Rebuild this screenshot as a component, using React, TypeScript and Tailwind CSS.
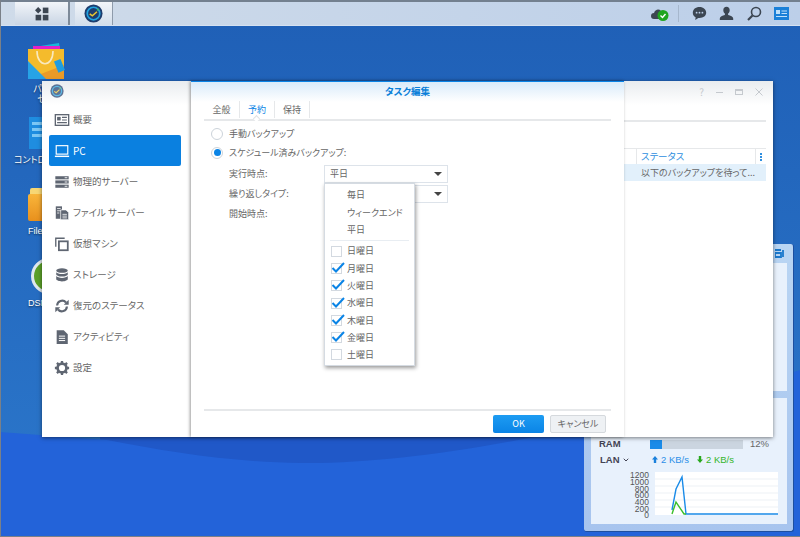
import React from "react";
import { ChevronDown } from "lucide-react";

const JP = "font-['Noto_Sans_CJK_JP','Noto_Sans',sans-serif]";

const navItems = [
  { label: "概要", icon: "overview" },
  { label: "PC", icon: "pc", active: true },
  { label: "物理的サーバー", icon: "server" },
  { label: "ファイル サーバー", icon: "file" },
  { label: "仮想マシン", icon: "vm" },
  { label: "ストレージ", icon: "storage" },
  { label: "復元のステータス", icon: "restore" },
  { label: "アクティビティ", icon: "activity" },
  { label: "設定", icon: "gear" },
];

const days = [
  { label: "日曜日", on: false },
  { label: "月曜日", on: true },
  { label: "火曜日", on: true },
  { label: "水曜日", on: true },
  { label: "木曜日", on: true },
  { label: "金曜日", on: true },
  { label: "土曜日", on: false },
];

function NavIcon({ name, color }: { name: string; color: string }) {
  const c = color;
  return (
    <svg width="16" height="16" viewBox="0 0 18 18" fill="none" className="shrink-0">
      {name === "overview" && (
        <>
          <rect x="1.5" y="3" width="15" height="12" stroke={c} strokeWidth="1.5" />
          <rect x="3.5" y="5.5" width="4" height="4" fill={c} />
          <path d="M9 6h5.5M9 9h5.5M3.5 12h11" stroke={c} strokeWidth="1.3" />
        </>
      )}
      {name === "pc" && (
        <>
          <rect x="2.5" y="3" width="13" height="9.5" stroke={c} strokeWidth="1.3" />
          <path d="M1 15h16" stroke={c} strokeWidth="1.6" />
        </>
      )}
      {name === "server" && (
        <>
          <rect x="1.5" y="2.5" width="15" height="3.5" fill={c} />
          <rect x="1.5" y="7.2" width="15" height="3.5" fill={c} />
          <rect x="1.5" y="12" width="15" height="3.5" fill={c} />
          <path d="M12 4.2h3M12 9h3M12 13.8h3" stroke="#fff" strokeWidth="1" />
        </>
      )}
      {name === "file" && (
        <>
          <path d="M2 1.5h7v14H2z" fill={c} />
          <path d="M7.5 5.5h6l3 3v8h-9z" fill={c} stroke="#fff" strokeWidth="0.8" />
          <path d="M9.5 10.5h5M9.5 12.5h5M9.5 14.5h5M3.5 4h4M3.5 6.5h4M3.5 9h2.5" stroke="#fff" strokeWidth="0.9" />
        </>
      )}
      {name === "vm" && (
        <>
          <path d="M2 12V2.5h10" stroke={c} strokeWidth="1.5" />
          <rect x="5.5" y="6" width="10" height="10" stroke={c} strokeWidth="2" />
        </>
      )}
      {name === "storage" && (
        <>
          <ellipse cx="9" cy="4" rx="6.5" ry="2.6" fill={c} />
          <path d="M2.5 5.8v2.4c0 1.4 2.9 2.6 6.5 2.6s6.5-1.2 6.5-2.6V5.8c-1 1.3-3.6 2.1-6.5 2.1s-5.500-.8-6.500-2.100z" fill={c} />
          <path d="M2.5 10.2v3.4c0 1.4 2.9 2.6 6.5 2.6s6.5-1.2 6.5-2.6v-3.4c-1 1.3-3.6 2.1-6.5 2.1s-5.500-.8-6.500-2.100z" fill={c} />
        </>
      )}
      {name === "restore" && (
        <>
          <path d="M3.5 8.5A5.7 5.7 0 0 1 13.5 5" stroke={c} strokeWidth="2.4" />
          <path d="M11 7.5h5.5V2z" fill={c} />
          <path d="M14.5 9.5A5.7 5.7 0 0 1 4.5 13" stroke={c} strokeWidth="2.4" />
          <path d="M7 10.5H1.5V16z" fill={c} />
        </>
      )}
      {name === "activity" && (
        <>
          <path d="M3 1.5h8l4.5 4.5v11H3z" fill={c} />
          <path d="M5.5 8h7M5.5 10.5h7M5.5 13h7" stroke="#fff" strokeWidth="1.1" />
        </>
      )}
      {name === "gear" && (
        <>
          <circle cx="9" cy="9" r="5" stroke={c} strokeWidth="3" />
          <path d="M9 1v3M9 14v3M1 9h3M14 9h3M3.3 3.3l2.2 2.2M12.5 12.5l2.2 2.2M3.3 14.7l2.2-2.2M12.5 5.5l2.2-2.2" stroke={c} strokeWidth="2.6" />
        </>
      )}
    </svg>
  );
}

function AppLogo({ size, faded }: { size: number; faded?: boolean }) {
  return (
    <svg width={size} height={size} viewBox="0 0 20 20" className={faded ? "opacity-70" : ""}>
      <circle cx="10" cy="10" r="9.5" fill="#1d3d6e" />
      <circle cx="10" cy="10" r="6.6" fill="none" stroke="#21a3e0" strokeWidth="1.8" />
      <path d="M6 10.5l2.8 2 4.8-4.4" fill="none" stroke="#e9c531" strokeWidth="1.6" />
      <path d="M14 4l2.5 2.5-3 .6z" fill="#3fb36a" />
    </svg>
  );
}

function Select({ value }: { value?: string }) {
  return (
    <div className="w-[124px] h-[18px] border border-[#dde3ea] bg-white flex items-center justify-between px-[5px] text-[9px] text-[#666]">
      <span>{value}</span>
      <span className="w-0 h-0 border-x-[4px] border-x-transparent border-t-[4px] border-t-[#444]" />
    </div>
  );
}

function FormRow({ label, value }: { label: string; value?: string }) {
  return (
    <div className="flex items-center h-[18px]">
      <span className="w-[95px] text-[9px] text-[#666]">{label}</span>
      {value !== undefined && <Select value={value} />}
    </div>
  );
}

function Radio({ checked, label }: { checked?: boolean; label: string }) {
  return (
    <div className="flex items-center h-[19px] gap-[6px]">
      <span className="w-[12px] h-[12px] rounded-full border border-[#ccd3da] bg-white flex items-center justify-center">
        {checked && <span className="w-[7px] h-[7px] rounded-full bg-[#0a84e6]" />}
      </span>
      <span className="text-[9px] text-[#666]">{label}</span>
    </div>
  );
}

function Checkbox({ on }: { on: boolean }) {
  return (
    <span className="relative w-[11px] h-[11px] border border-[#d3d9e0] bg-white shrink-0">
      {on && (
        <svg width="15" height="13" viewBox="0 0 15 13" className="absolute -top-[3px] -left-[1px]">
          <path d="M1.5 7l3.5 3.5L13 2" fill="none" stroke="#0a84e6" strokeWidth="2" />
        </svg>
      )}
    </span>
  );
}

function ScheduleMenu() {
  return (
    <div className="absolute left-[324px] top-[183px] w-[91px] h-[183px] bg-white border border-[#d5dbe2] shadow-[1px_2px_4px_rgba(0,0,0,0.4)] pt-[2px] text-[9px] text-[#666] z-20">
      {["毎日", "ウィークエンド", "平日"].map((t) => (
        <div key={t} className="h-[17.5px] pl-[22px] flex items-center">
          {t}
        </div>
      ))}
      <div className="mx-[5px] mt-[1px] mb-[1px] border-t border-[#e8edf2]" />
      <div className="mt-[2px]">
        {days.map((d) => (
          <div key={d.label} className="h-[17.3px] pl-[6px] flex items-center gap-[5px]">
            <Checkbox on={d.on} />
            <span>{d.label}</span>
          </div>
        ))}
      </div>
    </div>
  );
}

function TaskDialog() {
  return (
    <div className="w-[433px] bg-white border-t border-[#0a84e6] bg-gradient-to-b from-[#d9ebfa] via-white to-white bg-[length:100%_40px] bg-no-repeat flex flex-col px-[13px] shadow-[-1px_0_3px_rgba(0,0,0,0.4)] relative z-10">
      <div className="h-[19px] text-center text-[9.5px] font-bold text-[#0a7fd9] leading-[18px]">タスク編集</div>
      <div className="flex h-[20px] border-b-2 border-[#e6e8ea] text-[9px] text-[#666]">
        <div className="w-[36px] flex items-center justify-center border-r border-[#e6e8ea] h-[17px]">全般</div>
        <div className="relative w-[35px] flex items-center justify-center border-r border-[#e6e8ea] h-[17px] text-[#0a84e6]">
          予約
          <span className="absolute left-[14px] top-[15px] w-[5px] h-[5px] rotate-45 bg-white border-l border-t border-[#dfe2e5]" />
        </div>
        <div className="w-[35px] flex items-center justify-center border-r border-[#e6e8ea] h-[17px]">保持</div>
      </div>
      <div className="flex flex-col pl-[7px] pt-[3px]">
        <Radio label="手動バックアップ" />
        <Radio checked label="スケジュール済みバックアップ:" />
        <div className="pl-[18px] flex flex-col gap-[2px] pt-[3px]">
          <FormRow label="実行時点:" value="平日" />
          <FormRow label="繰り返しタイプ:" value="" />
          <FormRow label="開始時点:" />
        </div>
      </div>
      <div className="mt-auto border-t-2 border-[#e6e8ea] h-[28px] flex items-start justify-end gap-[6px] pt-[4px] pr-[5px]">
        <button className="w-[51px] h-[18px] rounded-[2px] bg-gradient-to-b from-[#1d9cf2] to-[#0a84e6] text-white text-[9px]">OK</button>
        <button className="w-[56px] h-[18px] rounded-[2px] bg-[#eef1f4] border border-[#d5d9dd] text-[#666] text-[9px]">キャンセル</button>
      </div>
    </div>
  );
}

function Sidebar() {
  return (
    <div className="w-[149px] shrink-0 bg-white bg-gradient-to-b from-[#e9ecef] to-white bg-[length:100%_24px] bg-no-repeat flex flex-col pl-[7px] pr-[10px]">
      <div className="h-[23px] pt-[3px] pl-[1px]">
        <AppLogo size={14} faded />
      </div>
      {navItems.map((n) => (
        <div
          key={n.label}
          className={
            n.active
              ? "h-[31px] rounded-[2px] bg-[#0a80e0] text-white flex items-center pl-[5px] gap-[3px] text-[10px]"
              : "h-[31px] text-[#666] flex items-center pl-[5px] gap-[3px] text-[9.5px] whitespace-nowrap"
          }
        >
          <NavIcon name={n.icon} color={n.active ? "#ffffff" : "#5f6672"} />
          <span>{n.label}</span>
        </div>
      ))}
    </div>
  );
}

function BackWindowPane() {
  return (
    <div className="flex-1 bg-white bg-gradient-to-b from-[#e9ecef] to-white bg-[length:100%_24px] bg-no-repeat flex flex-col pr-[7px]">
      <div className="h-[22px] flex items-center justify-end gap-[12px] pr-[3px] text-[#c5c9ce]">
        <span className="text-[10px] leading-none">?</span>
        <span className="w-[7px] border-t border-[#c5c9ce]" />
        <span className="w-[8px] h-[6px] border border-t-2 border-[#c5c9ce]" />
        <svg width="8" height="8" viewBox="0 0 8 8">
          <path d="M0.5 0.5l7 7M7.5 0.5l-7 7" stroke="#c5c9ce" />
        </svg>
      </div>
      <div className="mt-[17px] border-t-2 border-[#e6e8ea]" />
      <div className="mt-[26px] h-[16px] border-t border-[#e6e8ea] flex items-center text-[9.5px] text-[#2f8fe0]">
        <span className="border-l border-[#e6e8ea] h-full ml-[12px] pl-[4px] flex items-center flex-1">ステータス</span>
        <span className="border-l border-[#e6e8ea] h-full w-[11px] flex flex-col items-center justify-center gap-[1px]">
          <span className="w-[2px] h-[2px] bg-[#2f8fe0]" />
          <span className="w-[2px] h-[2px] bg-[#2f8fe0]" />
          <span className="w-[2px] h-[2px] bg-[#2f8fe0]" />
        </span>
      </div>
      <div className="h-[17px] bg-[#e2f0fb] pl-[17px] flex items-center text-[9px] text-[#666] whitespace-nowrap overflow-hidden">以下のバックアップを待って...</div>
    </div>
  );
}

function NetChart() {
  const labels = ["1200", "1000", "800", "600", "400", "200", "0"];
  return (
    <div className="flex items-start gap-[6px] pl-[40px] pr-[9px]">
      <div className="w-[18px] flex flex-col items-end text-[8.5px] leading-[6.67px] text-[#555]">
        {labels.map((l) => (
          <span key={l}>{l}</span>
        ))}
      </div>
      <svg width="123" height="43" viewBox="0 0 123 43" className="bg-white">
        {[7, 14, 21, 28, 35].map((y) => (
          <path key={y} d={`M0 ${y}H123`} stroke="#edf1f5" />
        ))}
        <path d="M17 38L21 17L27 5L31 42H123" fill="none" stroke="#1a8be8" strokeWidth="1.4" />
        <path d="M17 42L21 30L29 42H31" fill="none" stroke="#3cbf2a" strokeWidth="1.4" />
      </svg>
    </div>
  );
}

function ResourceWidget() {
  return (
    <div className="absolute left-[584px] top-[244px] w-[210px] h-[288px] rounded-[3px] bg-gradient-to-b from-[#b9d5f3] to-[#a7c4ee] border-r border-b border-[#1d4fa0] pl-[7px] pr-[6px] pb-[7px] flex flex-col">
      <div className="h-[19px] flex items-center justify-end pr-[2px]">
        <svg width="10" height="9" viewBox="0 0 10 9">
          <path d="M0 1h6M0 4h6v4H0zM8 1v7" fill="none" stroke="#1a78cc" strokeWidth="1.800" />
        </svg>
      </div>
      <div className="h-[128px] bg-[#e8f1fc]" />
      <div className="mt-[7px] flex-1 bg-[#e8f1fc] flex flex-col justify-end pb-[5px] font-['Liberation_Sans',sans-serif]">
        <div className="flex items-center h-[14px] text-[9.5px]">
          <span className="w-[59px] pl-[8px] font-bold text-[#445]">RAM</span>
          <div className="w-[93px] h-[9px] bg-[#cbd5e0]">
            <div className="h-full bg-[#1a8be8]" style={{ width: "13%" }} />
          </div>
          <span className="ml-[7px] text-[#666]">12%</span>
        </div>
        <div className="flex items-center h-[17px] text-[9.5px] mb-[4px]">
          <span className="w-[61px] pl-[9px] font-bold text-[#445] flex items-center gap-[2px]">
            LAN
            <ChevronDown size={8} strokeWidth={3} />
          </span>
          <span className="w-[45px] text-[#2b8fe8] flex items-center gap-[3px]">
            <svg width="6" height="7" viewBox="0 0 6 7"><path d="M3 0l3 3.500H4.200V7H1.800V3.500H0z" fill="#1a80dc" /></svg>
            2 KB/s
          </span>
          <span className="text-[#35b52a] flex items-center gap-[3px]">
            <svg width="6" height="7" viewBox="0 0 6 7"><path d="M3 7L0 3.500h1.800V0h2.400v3.500H6z" fill="#28a81e" /></svg>
            2 KB/s
          </span>
        </div>
        <NetChart />
      </div>
    </div>
  );
}

function DesktopIcons() {
  return (
    <div className="text-white text-[9px] leading-[10px] text-center [text-shadow:0_1px_2px_rgba(0,0,0,0.6)]">
      <div className="absolute left-[24px] top-[43px] w-[60px] flex flex-col items-center">
        <svg width="38" height="36" viewBox="0 0 38 36" className="-ml-[15px]">
          <path d="M6 4l25-4 1 6H6z" fill="#19b6d8" />
          <path d="M5 3h27v5H5z" fill="#e021c8" />
          <path d="M0 6h36v30H0z" fill="#f4bb2c" />
          <path d="M0 36l36-14v14z" fill="#ea9a28" />
          <path d="M0 18l18 18H0z" fill="#27a3e6" />
          <path d="M9 8c0 17 16 17 16 0" fill="none" stroke="#f9e9bd" strokeWidth="1.600" />
          <rect x="28" y="17" width="7" height="12" transform="rotate(-22 31 23)" fill="#1f9de0" />
        </svg>
        <div className="mt-[5px] whitespace-nowrap">パッケージ<br />センター</div>
      </div>
      <div className="absolute left-[14px] top-[117px] w-[70px] flex flex-col items-start">
        <div className="ml-[15px] w-[36px] h-[32px] bg-[#1f8de0] flex flex-col gap-[3px] pt-[5px] pl-[3px]">
          <span className="w-[20px] h-[3px] bg-[#7cc7f5]" />
          <span className="w-[20px] h-[3px] bg-[#7cc7f5]" />
          <span className="w-[20px] h-[3px] bg-[#7cc7f5]" />
        </div>
        <div className="mt-[6px] whitespace-nowrap">コントロールパネル</div>
      </div>
      <div className="absolute left-[28px] top-[188px] flex flex-col items-start">
        <div className="relative w-[36px] h-[33px]">
          <div className="absolute left-[2px] top-0 w-[34px] h-[12px] rounded-t-[2px] bg-[#f7d774]" />
          <div className="absolute left-0 top-[6px] w-[36px] h-[27px] rounded-[2px] bg-gradient-to-b from-[#f8b53a] to-[#e8901c]" />
        </div>
        <div className="mt-[5px] whitespace-nowrap font-['Liberation_Sans',sans-serif]">File Station</div>
      </div>
      <div className="absolute left-[28px] top-[258px] flex flex-col items-start">
        <div className="ml-[3px] w-[36px] h-[36px] rounded-full bg-[#5a9f28] border-[3px] border-[#dfe7ee]" />
        <div className="mt-[4px] whitespace-nowrap font-['Liberation_Sans',sans-serif]">DSM Help</div>
      </div>
    </div>
  );
}

function Taskbar() {
  return (
    <div className="relative z-30 h-[26px] bg-gradient-to-r from-[#cfdbe9] to-[#bccfe9] border-t-2 border-[#73808f] border-b border-b-[#d5e1f1] flex items-stretch pl-[15px]">
      <button className="w-[55px] bg-gradient-to-b from-[#f2f5f9] to-[#c9d5e4] border-r-2 border-[#7d8a99] flex items-center justify-center">
        <svg width="14" height="14" viewBox="0 0 14 14" fill="#3c4652">
          <path d="M3.2 0l3.2 3.2-3.2 3.2L0 3.2z" />
          <rect x="7.8" y="0.6" width="5.6" height="5.6" />
          <rect x="0.6" y="7.8" width="5.6" height="5.6" />
          <rect x="7.8" y="7.8" width="5.6" height="5.6" />
        </svg>
      </button>
      <button className="ml-[5px] w-[38px] bg-gradient-to-b from-[#f2f5f9] to-[#d3deeb] border-r border-[#8e9bab] flex items-center justify-center">
        <AppLogo size={19} />
      </button>
      <div className="ml-auto flex items-center pr-[11px]">
        <svg width="18" height="14" viewBox="0 0 18 14">
          <path d="M3 12a3 3 0 0 1 0-6 4 4 0 0 1 7-2 3.5 3.5 0 0 1 5 3v5z" fill="#3c4652" />
          <circle cx="12" cy="8.5" r="5.5" fill="#1fa51f" />
          <path d="M9.5 8.5l2 2 3-3.5" fill="none" stroke="#fff" strokeWidth="1.4" />
        </svg>
        <span className="ml-[9px] mr-[13px] h-[17px] border-l border-[#a6b7cd]" />
        <svg width="15" height="15" viewBox="0 0 15 15" fill="#3c4652">
          <path d="M7.5 1C3.6 1 .8 3.4.8 6.7c0 2 1.100 3.600 2.800 4.600l-.3 2.700 3-2.100h1.200c3.900 0 6.700-2.200 6.700-5.200S11.400 1 7.500 1z" />
          <circle cx="4.600" cy="6.700" r="0.900" fill="#bccfe9" />
          <circle cx="7.500" cy="6.700" r="0.900" fill="#bccfe9" />
          <circle cx="10.400" cy="6.700" r="0.900" fill="#bccfe9" />
        </svg>
        <svg width="15" height="15" viewBox="0 0 15 15" fill="#3c4652" className="ml-[12px]">
          <path d="M7.500 0.800c-2 0-3.200 1.500-3.200 3.400 0 1.500.7 2.700 1.600 3.400v1.300C3.500 9.500.8 10.600.8 12.400V14h13.400v-1.600c0-1.800-2.700-2.900-5.100-3.500V7.600c.9-.7 1.600-1.900 1.600-3.400 0-1.900-1.200-3.400-3.200-3.400z" />
        </svg>
        <svg width="15" height="15" viewBox="0 0 15 15" fill="none" className="ml-[13px]">
          <circle cx="9" cy="6" r="4.500" stroke="#3c4652" strokeWidth="1.600" />
          <path d="M5.500 9.500L1 14" stroke="#3c4652" strokeWidth="2.200" />
        </svg>
        <svg width="15" height="13" viewBox="0 0 15 13" className="ml-[12px]">
          <rect x="0" y="0" width="15" height="13" fill="#1a80d8" />
          <rect x="2" y="3" width="4" height="4" fill="#bfe0fa" />
          <path d="M7.500 4h5.500M7.500 6.500h5.500M2 9.500h11" stroke="#bfe0fa" />
        </svg>
      </div>
    </div>
  );
}

export default function App() {
  return (
    <div className={`relative w-[800px] h-[537px] overflow-hidden bg-gradient-to-b from-[#1f5fb6] to-[#2c78cc] [font-feature-settings:'palt'] ${JP}`}>
      <svg width="800" height="537" className="absolute inset-0">
        <path d="M100 436H600V480H100z" fill="#2058c8" />
        <path d="M0 432L107 440C170 452 230 462 300 463C420 465 600 430 800 370V537H0z" fill="#2363d9" />
      </svg>
      <Taskbar />
      <DesktopIcons />
      <ResourceWidget />
      <div className="absolute left-[42px] top-[81px] w-[731px] h-[356px] flex shadow-[0_1px_4px_rgba(0,0,0,0.5)]">
        <Sidebar />
        <TaskDialog />
        <BackWindowPane />
      </div>
      <ScheduleMenu />
      <div className="absolute inset-0 z-40 pointer-events-none shadow-[inset_1px_-1px_0_#7a8088]" />
    </div>
  );
}
